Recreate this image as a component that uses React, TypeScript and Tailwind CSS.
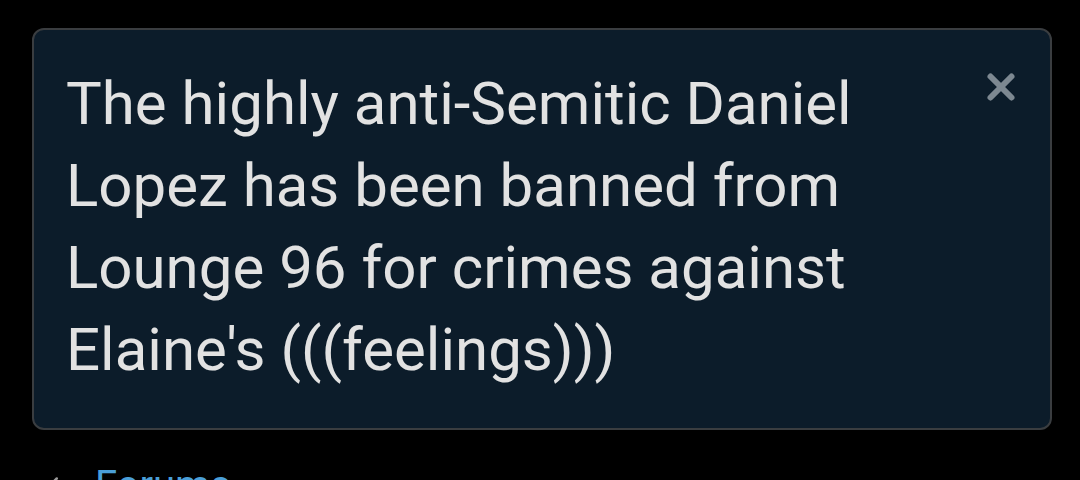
import { X, ChevronLeft } from "lucide-react";

const App = () => {
  return (
    <div className="h-[480px] w-[1080px] overflow-hidden bg-black font-['Roboto',sans-serif]">
      <div className="pl-[32px] pr-[28px] pt-[28px]">
        <div className="flex h-[402px] rounded-[12px] border-2 border-[#3a3d40] bg-[#0c1c2a] pl-[32px] pr-[28px] pt-[33px]">
          <p className="w-[880px] text-[60px] leading-[82px] text-[#e2e2e2]">
            The highly anti-Semitic Daniel Lopez has been banned from Lounge 96
            for crimes against Elaine's (((feelings)))
          </p>
          <div className="ml-auto pt-[3px]">
            <X className="h-[42px] w-[42px] text-[#7d8891]" strokeWidth={3.4} />
          </div>
        </div>
      </div>
      <div className="mt-[36px] flex items-center gap-[27px] pl-[38px]">
        <ChevronLeft className="h-[30px] w-[30px] text-[#9a9a9a]" strokeWidth={2} />
        <span className="text-[40px] leading-none text-[#4a9fd8]">Forums</span>
      </div>
    </div>
  );
};

export default App;
